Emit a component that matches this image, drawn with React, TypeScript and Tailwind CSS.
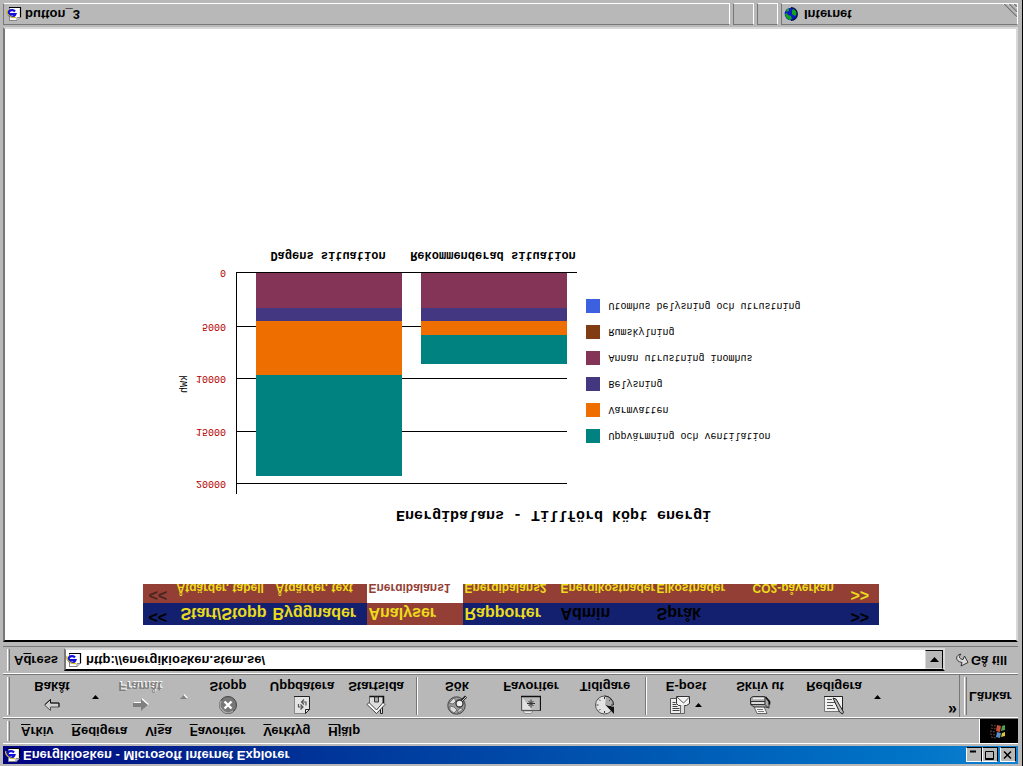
import type { ReactNode } from "react";

const series = [
    { name: "Uppvärmning och ventilation", color: "#008281", values: [9600, 2757] },
    { name: "Varmvatten", color: "#ee6f00", values: [5133, 1331] },
    { name: "Belysning", color: "#433781", values: [1236, 1236] },
    { name: "Annan utrustning inomhus", color: "#833457", values: [3327, 3327] },
    { name: "Rumskylning", color: "#823c14", values: [0, 0] },
    { name: "Utomhus belysning och utrustning", color: "#3c60e0", values: [0, 0] },
];

const menus = [
    ["", "A", "rkiv"],
    ["", "R", "edigera"],
    ["Vi", "s", "a"],
    ["", "F", "avoriter"],
    ["", "V", "erktyg"],
    ["", "H", "jälp"],
];

const mainTabs = ["Start/Stopp", "Byggnader", "Analyser", "Rapporter", "Admin", "Språk", ""];
const subTabs = ["Åtgärder, tabell", "Åtgärder, text", "Energibalans1", "Energibalans2", "Energikostnader", "Elkostnader", "CO2-påverkan"];

const PageIcon = () => (
    <svg width="16" height="16" viewBox="0 0 16 16" className="shrink-0">
        <path d="M3 1h8l3.500 3.500V15H3z" fill="#fff" />
        <path d="M3 14.500h11.500V4.500" fill="none" stroke="#000" strokeWidth="1.200" />
        <path d="M3.500 1v13M3 1.500h8l3 3h-3v-3" fill="none" stroke="#888" />
        <path d="M9 10.500A3.600 3.200 0 1 1 9.500 8H3" fill="none" stroke="#1010d8" strokeWidth="2.200" />
        <path d="M1 12C-1 8 6 3.500 10 4.500" fill="none" stroke="#d8c020" strokeWidth="1.200" />
    </svg>
);

const GlobeIcon = () => (
    <svg width="14" height="14" viewBox="0 0 14 14" className="shrink-0">
        <circle cx="7" cy="7" r="6.300" fill="#0a18c8" />
        <path d="M2 4l3-3 3 1-1 3-3 1-1 2-2-1zM8 7l3-2 2 2-1 4-3 1-1-2zM2 9l3 1v3l-2-1z" fill="#12a51c" />
        <path d="M7 .7a6.300 6.300 0 0 1 0 12.600" fill="none" stroke="#001040" strokeWidth="1.300" />
    </svg>
);

const BackIcon = () => (
    <svg width="20" height="20" viewBox="0 0 20 20">
        <path d="M2.500 10l6-5.500v3.500h8.500v4H8.500v3.500z" fill="#d0d0d0" stroke="#555" />
        <path d="M3 10.500l5.500 5v-3.500H17V8" fill="none" stroke="#111" />
    </svg>
);

const ForwardIcon = () => (
    <svg width="20" height="20" viewBox="0 0 20 20">
        <path d="M19 11l-7 6v-4H4V9h8V5z" fill="#fff" />
        <path d="M18 10l-7 6v-4H3V8h8V4z" fill="#808080" />
    </svg>
);

const StopIcon = () => (
    <svg width="20" height="20" viewBox="0 0 20 20">
        <circle cx="10" cy="10" r="8.500" fill="#777" stroke="#444" />
        <path d="M3 14a8 8 0 0 1 12-10" fill="none" stroke="#aaa" strokeWidth="1.500" />
        <path d="M6.500 6.500l7 7M13.500 6.500l-7 7" stroke="#fff" strokeWidth="2.400" />
    </svg>
);

const RefreshIcon = () => (
    <svg width="20" height="20" viewBox="0 0 20 20">
        <path d="M2.500 1.500h11l4 4v13h-15z" fill="#e4e4e4" stroke="#888" />
        <path d="M2 18.500h15.500V5.500l-4-4v4h4" fill="none" stroke="#222" />
        <path d="M6.500 11V8h4M8.500 5.500L11 8l-2.500 2.500M14 9.500v3.500H9.500M12 10.500L9.500 13l2.500 2.500" fill="none" stroke="#555" strokeWidth="1.200" />
    </svg>
);

const HomeIcon = () => (
    <svg width="20" height="20" viewBox="0 0 20 20">
        <path d="M14.500 8V1.500h2V10" fill="#ddd" stroke="#222" />
        <path d="M3.500 10.500l7-7.500 6.500 7.500v8H3.500z" fill="#ddd" stroke="#666" />
        <path d="M1 10.500l9.500-9 8.500 9-2 2-6.500-7.500L3 12.500z" fill="#f8f8f8" stroke="#333" strokeWidth=".9" />
        <path d="M17.500 12v6.500h-14" fill="none" stroke="#111" strokeWidth="1.500" />
        <path d="M8.500 18v-5h4v5z" fill="#aaa" stroke="#333" />
    </svg>
);

const SearchIcon = () => (
    <svg width="20" height="20" viewBox="0 0 20 20">
        <circle cx="9.500" cy="9.500" r="8.700" fill="#999" stroke="#444" />
        <path d="M3 5l4-3 3 3-3 3-4 1zM11 2l5 4-2 1-3-2zM2 12l4-1 3 3-2 3z" fill="#ddd" stroke="#555" strokeWidth=".7" />
        <circle cx="12.500" cy="11.500" r="3.500" fill="#eee" stroke="#333" strokeWidth="1.300" />
        <path d="M15 14.500l4 4" stroke="#222" strokeWidth="3" />
        <path d="M15 14l4 4" stroke="#ccc" />
    </svg>
);

const FavoritesIcon = () => (
    <svg width="20" height="20" viewBox="0 0 20 20">
        <path d="M2 4l2-2.500h6l2 2.500z" fill="#eee" stroke="#777" strokeWidth=".7" />
        <path d="M.500 4.500h19v14H.500z" fill="#bbb" stroke="#555" />
        <path d="M1.500 17.500V5.500h9z" fill="#e2e2e2" />
        <path d="M19.500 4.500v14H0" fill="none" stroke="#111" strokeWidth="1.300" />
        <path d="M10 7.500v8M6 11.500h8M7.500 9l5 5M12.500 9l-5 5" stroke="#333" />
    </svg>
);

const HistoryIcon = () => (
    <svg width="22" height="20" viewBox="0 0 22 20">
        <circle cx="10.500" cy="10" r="9" fill="#e4e4e4" stroke="#555" />
        <path d="M11 10.500L20 1v7z" fill="#111" />
        <path d="M11 10l9-1.500c0 5-3 9-8 10.500z" fill="#aaa" />
        <path d="M10.500 2v2M10.500 16v2M2.500 10h2M5 4.500l1.300 1.300M5 15.500l1.300-1.300M16.500 15.500l-1.300-1.300M17 10h2" stroke="#333" />
        <path d="M19.500 10a9 9 0 0 1-9 9" fill="none" stroke="#222" />
    </svg>
);

const MailIcon = () => (
    <svg width="22" height="20" viewBox="0 0 22 20">
        <path d="M1.500 1.500h12v15h-12z" fill="#eee" stroke="#555" />
        <path d="M3.500 4.500h7M3.500 6.500h7M3.500 8.500h5M3.500 10.500h4M3.500 12.500h3" stroke="#444" />
        <path d="M7.500 11.500l2 -2h8l3 2v7h-13z" fill="#f4f4f4" stroke="#333" />
        <path d="M8 18l6.500-6 6 6" fill="none" stroke="#555" />
        <path d="M11.500 10V1.500h4V10" fill="#ddd" stroke="#666" />
    </svg>
);

const PrintIcon = () => (
    <svg width="22" height="20" viewBox="0 0 22 20">
        <path d="M5 8.500L8 1.500h10l-3 7z" fill="#f4f4f4" stroke="#666" />
        <path d="M9 3.500h6M8 5.500h6" stroke="#777" />
        <path d="M1.500 10.500L5 8h12l3-1v6l-4 5.500H4L1.500 17z" fill="#aaa" stroke="#333" />
        <path d="M2 10.500h14l3-3M2 13.500h14M16 10.500V18" fill="none" stroke="#333" />
        <path d="M3 12h12M4 16.500h11" stroke="#eee" strokeWidth="1.500" />
        <path d="M16.500 18l4-4.500v-3" fill="none" stroke="#111" strokeWidth="1.600" />
    </svg>
);

const EditIcon = () => (
    <svg width="20" height="20" viewBox="0 0 20 20">
        <path d="M.500 3.500h18v15H.500z" fill="#f2f2f2" stroke="#777" />
        <path d="M0 18.500h18.500V3" fill="none" stroke="#222" />
        <path d="M3 15.500h5M3 12.500h8M3 9.500h6M3 6.500h8" stroke="#555" />
        <path d="M9 17l3-1 7.500-13-1-2-3 2z" fill="#bbb" stroke="#222" />
    </svg>
);

const GoIcon = () => (
    <svg width="14" height="16" viewBox="0 0 14 16">
        <path d="M6 14C0 13 0 6.500 7 5.500L6 2l7 3.500L9.500 12 8 8.500C4 9 3.500 11.500 6 14z" fill="#ddd" stroke="#333" />
    </svg>
);

const WindowsLogo = () => (
    <svg width="20" height="18" viewBox="0 0 20 18">
        <path d="M2 3l5-1M1 6l5-1M1 9l5-1M2 12l5-1M2 15l5-1" stroke="#6b4a44" strokeDasharray="2 1" />
        <path d="M7 3l4-1 1 5-4 1z" fill="#5890cc" />
        <path d="M12 3l4 1v4l-3-1z" fill="#e0c438" />
        <path d="M7 9l4-1 1 6-4 1z" fill="#c8503c" />
        <path d="M12 9l4 1v5l-3-1z" fill="#4ea052" />
    </svg>
);

const Caret = ({ disabled }: { disabled?: boolean }) => (
    <svg width="8" height="5" viewBox="0 0 8 5">
        {disabled && <path d="M1 1h7L4.500 5z" fill="#fff" />}
        <path d="M0 0h7L3.500 4z" fill={disabled ? "#808080" : "#000"} />
    </svg>
);

const Grip = () => <div className="w-[3px] shrink-0 self-stretch border-l border-r border-l-white border-r-[#777]" />;

const Separator = () => (
    <div className="flex w-[7px] shrink-0 justify-center self-stretch">
        <div className="w-0.5 border-l border-r border-l-[#777] border-r-white" />
    </div>
);

const ToolButton = ({ label, disabled, children }: { label: string; disabled?: boolean; children: ReactNode }) => (
    <button type="button" disabled={disabled} className="flex w-[74px] shrink-0 flex-col items-center">
        <span className="flex h-5 items-center">{children}</span>
        <span className={disabled ? "leading-[18px] text-[#808080] [text-shadow:1px_1px_0_#fff]" : "leading-[18px]"}>{label}</span>
    </button>
);

const CaretButton = ({ label, disabled }: { label: string; disabled?: boolean }) => (
    <button type="button" aria-label={label} disabled={disabled} className="flex h-9 w-[14px] shrink-0 items-center justify-center">
        <Caret disabled={disabled} />
    </button>
);

const CaptionButton = ({ label, children }: { label: string; children: ReactNode }) => (
    <button type="button" aria-label={label} className="flex h-[15px] w-4 items-center justify-center border border-t-white border-r-black border-b-black border-l-white bg-[#b8b8b8]">
        <svg width="10" height="10" viewBox="0 0 10 10" fill="none" stroke="#000">{children}</svg>
    </button>
);

const TitleBar = () => (
    <header className="flex h-[18px] items-center bg-linear-to-r from-[#000080] to-[#1080d0] px-0.5 text-white">
        <PageIcon />
        <h1 className="flex-1 pl-0.5 leading-4">Energikiosken - Microsoft Internet Explorer</h1>
        <CaptionButton label="Minimera"><path d="M1 8.500h6" strokeWidth="2" /></CaptionButton>
        <CaptionButton label="Maximera"><path d="M.500 .500h8v8h-8zM0 1.500h9" /></CaptionButton>
        <div className="w-0.5" />
        <CaptionButton label="Stäng"><path d="M1 1.500l7 7M8 1.500l-7 7" strokeWidth="1.500" /></CaptionButton>
    </header>
);

const MenuBar = () => (
    <nav className="mt-0.5 flex h-[26px] border-t border-b border-t-white border-b-[#777]">
        <div className="flex flex-1 items-center py-0.5 pl-1">
            <Grip />
            <div className="flex gap-[18px] pl-[11px]">
                {menus.map(([before, key, after]) => (
                    <button type="button" key={key + after} className="leading-5">
                        {before}<span className="underline underline-offset-2">{key}</span>{after}
                    </button>
                ))}
            </div>
        </div>
        <div className="flex w-[39px] items-center justify-center border-l border-l-white bg-black">
            <WindowsLogo />
        </div>
    </nav>
);

const ToolBar = () => (
    <div className="flex h-11 items-stretch border-t border-b border-t-white border-b-[#777]">
        <div className="flex flex-1 py-0.5 pl-1">
            <Grip />
            <div className="flex flex-1 pl-[5px]">
                <ToolButton label="Bakåt"><BackIcon /></ToolButton>
                <CaretButton label="Bakåt, lista" />
                <ToolButton label="Framåt" disabled><ForwardIcon /></ToolButton>
                <CaretButton label="Framåt, lista" disabled />
                <ToolButton label="Stopp"><StopIcon /></ToolButton>
                <ToolButton label="Uppdatera"><RefreshIcon /></ToolButton>
                <ToolButton label="Startsida"><HomeIcon /></ToolButton>
                <Separator />
                <ToolButton label="Sök"><SearchIcon /></ToolButton>
                <ToolButton label="Favoriter"><FavoritesIcon /></ToolButton>
                <ToolButton label="Tidigare"><HistoryIcon /></ToolButton>
                <Separator />
                <ToolButton label="E-post">
                    <span className="flex items-center gap-1"><MailIcon /><Caret /></span>
                </ToolButton>
                <ToolButton label="Skriv ut"><PrintIcon /></ToolButton>
                <ToolButton label="Redigera"><EditIcon /></ToolButton>
                <CaretButton label="Redigera, lista" />
                <button type="button" className="ml-auto mr-0.5 self-start text-base leading-[10px]">»</button>
            </div>
        </div>
        <div className="flex w-[59px] items-center border-l border-l-[#777] py-0.5 pl-1">
            <Grip />
            <span className="pl-0.5">Länkar</span>
        </div>
    </div>
);

const AddressBar = () => (
    <div className="flex h-7 items-stretch border-t border-b border-t-white border-b-[#777]">
        <div className="flex flex-1 items-center py-0.5 pl-1">
            <Grip />
            <label htmlFor="address" className="w-[54px] pl-1">A<span className="underline underline-offset-2">d</span>ress</label>
            <div className="flex h-[23px] flex-1 items-center border-2 border-t-black border-r-[#d8d8d8] border-b-[#d8d8d8] border-l-[#777] bg-white">
                <PageIcon />
                <input id="address" type="text" defaultValue="http://energikiosken.stem.se/" className="min-w-0 flex-1 bg-white pl-1 leading-4 outline-none" />
                <button type="button" aria-label="Visa adresser" className="flex h-full w-[18px] items-center justify-center border border-t-[#d8d8d8] border-r-black border-b-black border-l-[#d8d8d8] bg-[#b8b8b8]">
                    <svg width="9" height="5" viewBox="0 0 9 5"><path d="M0 0h9L4.500 5z" /></svg>
                </button>
            </div>
        </div>
        <button type="button" className="flex w-[73px] items-center gap-0.5 pl-2.5">
            <GoIcon />
            Gå till
        </button>
    </div>
);

const SiteNav = () => (
    <nav className="mx-auto w-[736px]">
        <div className="flex h-[22px] bg-[#13206f] text-base leading-6">
            <a href="#" className="w-8 pl-1.5 leading-4 text-black">&lt;&lt;</a>
            {mainTabs.map((tab, i) => (
                <a key={i} href="#" className={`w-24 whitespace-nowrap pl-0.5 ${i === 0 ? "text-center" : ""} ${i === 2 ? "bg-[#943f36]" : ""} ${i > 3 ? "text-black" : "text-[#eadb1c]"}`}>{tab}</a>
            ))}
            <a href="#" className="w-8 pl-1 leading-4 text-black">&gt;&gt;</a>
        </div>
        <div className="flex h-[19px] overflow-hidden bg-[#943f36] text-xs leading-[30px] text-[#eadb1c]">
            <a href="#" className="w-8 pl-1.5 text-base leading-4 text-[#4a2522]">&lt;&lt;</a>
            {subTabs.map((tab, i) => (
                <a key={tab} href="#" className={`w-24 whitespace-nowrap ${i === 1 ? "pl-[5px]" : "pl-0.5"} ${i === 2 ? "bg-white text-[#943f36]" : ""}`}>{tab}</a>
            ))}
            <a href="#" className="w-8 pl-1 text-base leading-4">&gt;&gt;</a>
        </div>
    </nav>
);

const BASE = 221;
const toPixels = (value: number) => (value * 210.4) / 20000;

const EnergyChart = () => (
    <svg width="405" height="250" viewBox="0 0 405 250" role="img" aria-label="Energibalans" className="shrink-0 font-['Liberation_Mono',monospace] font-normal">
        {[20000, 15000, 10000, 5000, 0].map((tick) => {
            const y = tick ? Math.round(BASE - 1 - toPixels(tick)) : BASE;
            return (
                <g key={tick}>
                    <rect x="61" y={y} width={tick ? 331 : 341} height="1" />
                    <text x="51" y={y + 3} textAnchor="end" fontSize="10" fill="#b40000">{tick}</text>
                </g>
            );
        })}
        <rect x="61" y="0" width="1" height="222" />
        {["Dagens situation", "Rekommenderad situation"].map((label, bar) => {
            let top = BASE - toPixels(series.reduce((sum, s) => sum + s.values[bar], 0));
            return (
                <g key={label}>
                    {series.map((s) => {
                        const y = Math.round(top);
                        top += toPixels(s.values[bar]);
                        return <rect key={s.name} x={bar ? 246 : 81} y={y} width="146" height={Math.round(top) - y} fill={s.color} />;
                    })}
                    <text x={bar ? 318 : 153} y="242" textAnchor="middle" fontSize="12" fontWeight="700">{label}</text>
                </g>
            );
        })}
        <text transform="translate(12 119) rotate(-90)" fontSize="10">kWh</text>
    </svg>
);

const StatusBar = () => (
    <footer className="flex h-[22px] gap-[3px]">
        <div className="flex flex-1 items-center border border-t-[#777] border-r-white border-b-white border-l-[#777] pl-0.5">
            <PageIcon />
            <span className="pl-[3px]">button_3</span>
        </div>
        <div className="w-[21px] border border-t-[#777] border-r-white border-b-white border-l-[#777]" />
        <div className="w-[21px] border border-t-[#777] border-r-white border-b-white border-l-[#777]" />
        <div className="flex w-[237px] items-center border border-t-[#777] border-r-white border-b-white border-l-[#777] pl-0.5">
            <GlobeIcon />
            <span className="flex-1 pl-1.5">Internet</span>
            <svg width="16" height="16" viewBox="0 0 16 16" className="self-end">
                <path d="M2 16L16 2M7 16l9-9M12 16l4-4" stroke="#fff" />
                <path d="M3 16L16 3M8 16l8-8M13 16l3-3" stroke="#777" strokeWidth="1.500" />
            </svg>
        </div>
    </footer>
);

export default function App() {
    return (
        <div className="flex min-h-screen -scale-y-100 flex-col border-r border-r-black bg-[#b8b8b8] pt-0.5 pr-1 pb-[3px] pl-[3px] font-['Liberation_Sans',Arial,sans-serif] text-[13px] font-bold text-black">
            <TitleBar />
            <MenuBar />
            <ToolBar />
            <AddressBar />
            <main className="mt-1 mb-0.5 flex-1 border-2 border-t-black border-r-[#d8d8d8] border-b-[#d8d8d8] border-l-[#777] bg-white pt-[15px]">
                <SiteNav />
                <div className="mx-auto w-[672px] pt-[60px]">
                    <h2 className="pl-[86px] text-center font-['Liberation_Mono',monospace] text-[15px] leading-5">Energibalans - Tillförd köpt energi</h2>
                    <div className="flex pt-2.5">
                        <EnergyChart />
                        <ul className="flex flex-col gap-3 pl-1.5 pt-[51px] font-['Liberation_Mono',monospace] text-[10px] font-normal">
                            {series.map((s) => (
                                <li key={s.name} className="flex h-3.5 items-center gap-[9px] whitespace-nowrap">
                                    <span className="size-3.5" style={{ backgroundColor: s.color }} />
                                    {s.name}
                                </li>
                            ))}
                        </ul>
                    </div>
                </div>
            </main>
            <StatusBar />
        </div>
    );
}
